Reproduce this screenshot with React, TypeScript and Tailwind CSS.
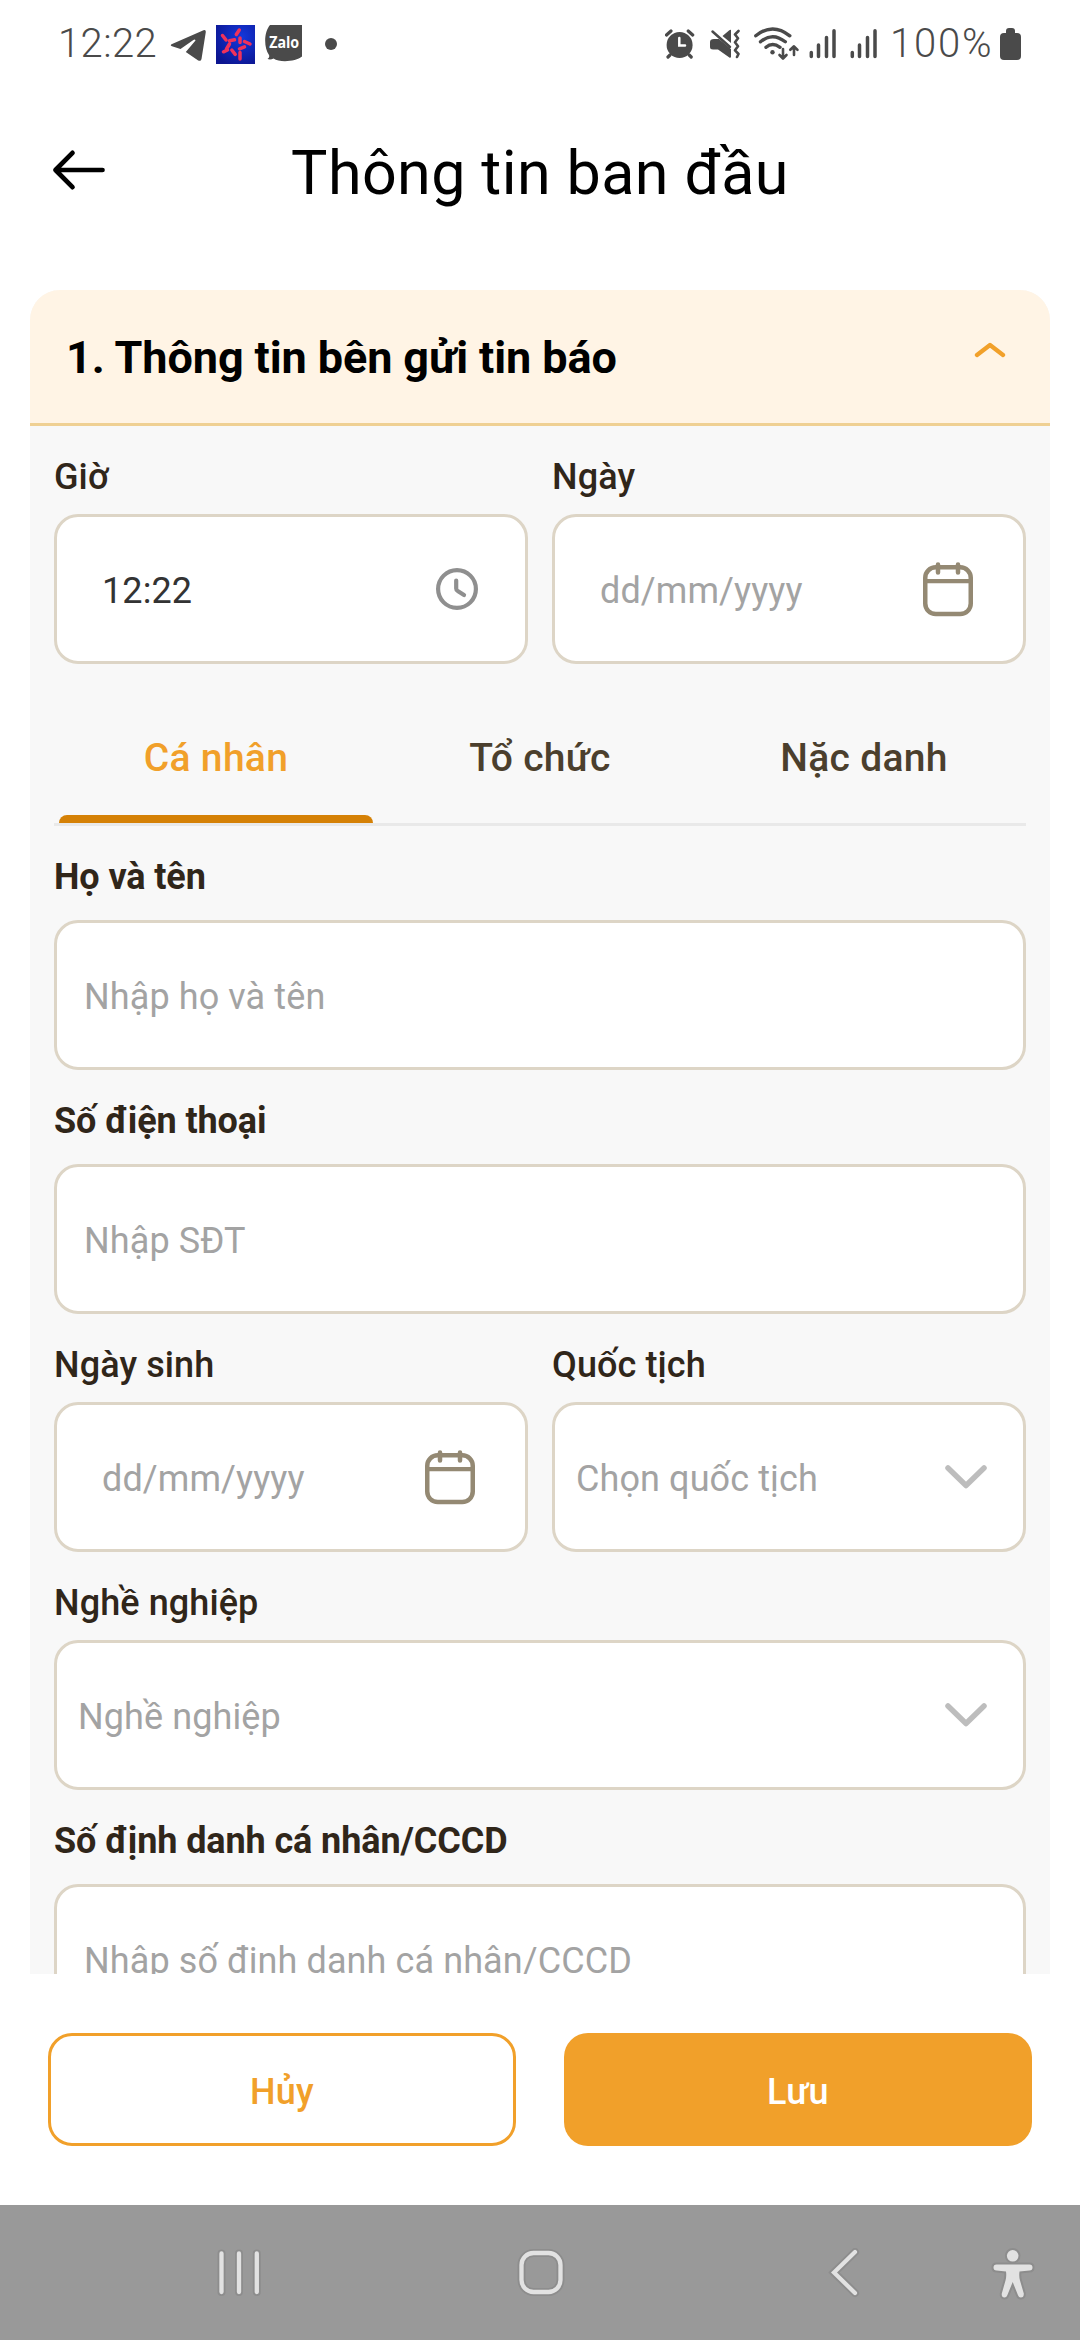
import React from "react";

function StatusBar() {
  return (
    <div className="flex h-[88px] items-start pl-[58px] pr-[59px] pt-[24px] text-[#4a4a4a]">
      <span className="h-[40px] w-[112px] whitespace-nowrap text-[40px] font-light leading-[40px] tracking-[0.400px]">12:22</span>
      <svg className="h-[40px] w-[37px]" viewBox="170 24 37 40" fill="currentColor">
        <path d="M171.500 44.200 L203.500 30.300 Q206 29.500 205.800 32 L201.500 59 Q200.800 61.800 198.200 60.400 L185.800 52 L195.500 40.500 Q195 39 193.400 40 L180.500 48.900 L172 46.300 Q169.800 45.300 171.500 44.200 Z" />
      </svg>
      <svg className="ml-[9px] mt-px h-[39px] w-[39px]" viewBox="0 0 39 39">
        <defs>
          <radialGradient id="blue" cx="0.65" cy="0.3" r="0.8">
            <stop offset="0" stopColor="#1438dc" />
            <stop offset="1" stopColor="#0c1590" />
          </radialGradient>
        </defs>
        <rect width="39" height="39" fill="url(#blue)" />
        <g stroke="#f0325a" strokeWidth="3.500" strokeLinecap="round">
          <path d="M23.300 5 L20.300 9.500 M6.500 10.500 L10 15 M13.500 15.800 L18.500 14.800 M24 13 L24 17.500 M28.500 16.500 L34 19 M13.500 19 L10.500 24 M28.500 21.800 L23.500 23.800 M11.500 25 L7.500 26.800 M15.800 25 L19.200 29.300 M24 27.500 L24 34" />
        </g>
      </svg>
      <svg className="ml-[10px] mt-px h-[38px] w-[37px]" viewBox="0 0 37 38">
        <path d="M5 0 H37 V31.500 C31 36.500 15 38 8.500 33.500 Q5.500 35.200 2.500 34 Q5 32.500 4 30 C-1.500 22 -1 7 5 0 Z" fill="#4a4a4a" />
        <text x="19.200" y="22.800" textAnchor="middle" fontSize="15.500" fontWeight="700" fill="#fff" fontFamily="Open Sans, sans-serif" textLength="30" lengthAdjust="spacingAndGlyphs">Zalo</text>
      </svg>
      <span className="ml-[23px] mt-[14px] size-[12px] rounded-full bg-[#4a4a4a]" />
      <div className="ml-auto flex items-start">
        <svg className="h-[40px] w-[30px]" viewBox="666 24 30 40">
          <circle cx="680.600" cy="45" r="13" fill="currentColor" />
          <path d="M667.500 35 L672 31 M693.700 35 L689.200 31 M671 55 L669 57 M690.200 55 L692.200 57" stroke="currentColor" strokeWidth="3.200" strokeLinecap="round" />
          <path d="M680.300 38 V45.500 H686" fill="none" stroke="#fff" strokeWidth="2.500" strokeLinecap="round" />
        </svg>
        <svg className="ml-[15px] h-[40px] w-[30px]" viewBox="711 24 30 40">
          <path d="M732 30 V43 L723.500 36 L730 30.600 Q731.500 29.500 732 30 Z M715 39 H720 L732 49 V57 Q731.500 58.500 730 57.300 L719 49.500 H714 Q711 49.500 711 47 V42 Q711 39 715 39 Z" fill="currentColor" />
          <path d="M713.500 31.500 L731 47" stroke="currentColor" strokeWidth="2.500" strokeLinecap="round" />
          <path d="M739.500 31 L736 34.500 L739 38.300 L736 42.300 L739 46.300 L736 50.300 L739.500 54 L738 57" fill="none" stroke="currentColor" strokeWidth="2.600" strokeLinejoin="round" strokeLinecap="round" />
        </svg>
        <svg className="ml-[14px] h-[40px] w-[46px]" viewBox="755 24 46 40" fill="none" stroke="currentColor" strokeWidth="3.400" strokeLinecap="round" strokeLinejoin="round">
          <path d="M756.800 35.800 Q773.500 22 790.800 35.800 M761.500 41.800 Q773.500 31.500 786.300 41.800 M767 47.300 Q773.500 41.700 781 47.300" />
          <circle cx="773.500" cy="52.300" r="2.200" fill="currentColor" stroke="none" />
          <path d="M784 49 V58 M780.500 55 L784 58.500 L787.500 55 M795 55 V46.500 M791.300 49.800 L795 46.300 L798.500 49.800" strokeWidth="2.600" />
        </svg>
        {[0, 1].map((i) => (
          <svg key={i} className="ml-[9px] h-[40px] w-[27px] last-of-type:ml-[14px]" viewBox="809 24 27 40" stroke="currentColor" strokeWidth="3.500" strokeLinecap="round">
            <path d="M811.300 52.500 V56.500 M818.500 45 V56.500 M826.500 37.500 V56.500 M834 30.700 V56.500" />
          </svg>
        ))}
        <span className="ml-[13px] h-[40px] w-[110px] whitespace-nowrap text-[40px] font-light leading-[40px] tracking-[1.800px]">100%</span>
        <span className="relative mt-[9px] h-[27px] w-[21px] rounded-[4px] bg-[#4a4a4a]">
          <span className="absolute left-[6px] top-[-5px] h-[6px] w-[9px] rounded-t-[3px] bg-[#4a4a4a]" />
        </span>
      </div>
    </div>
  );
}

function CalendarIcon() {
  return (
    <svg className="h-[56px] w-[50px]" viewBox="0 0 50 56" fill="none" stroke="#948973" strokeWidth="4.500" strokeLinecap="round">
      <rect x="2.250" y="6.250" width="45.500" height="46.800" rx="10.500" />
      <path d="M2.500 20.200 H47.500" strokeWidth="4.200" strokeLinecap="butt" />
      <path d="M15 3.500 V11.500 M35 3.500 V11.500" />
    </svg>
  );
}

function ClockIcon() {
  return (
    <svg className="h-[44px] w-[44px]" viewBox="0 0 44 44" fill="none" stroke="#8f8f8f" strokeWidth="4.200" strokeLinecap="round" strokeLinejoin="round">
      <circle cx="22" cy="22" r="18.900" />
      <path d="M21.200 13.500 V21.500 Q21.200 23.200 22.700 24 L29 28" />
    </svg>
  );
}

function ChevronDown() {
  return (
    <svg className="h-[26px] w-[42px]" viewBox="0 0 42 26" fill="none" stroke="#bdbdbd" strokeWidth="5.500" strokeLinecap="round" strokeLinejoin="round">
      <path d="M3 4 L21 21.500 L39 4" />
    </svg>
  );
}

function Label({ text, bold = false }: { text: string; bold?: boolean }) {
  return (
    <div className={bold ? "mb-[23px] h-[40px] whitespace-nowrap text-[36px] font-bold leading-[40px] tracking-[-0.100px] text-[#30261a]" : "mb-[17px] h-[40px] whitespace-nowrap text-[36px] font-medium leading-[40px] tracking-[0.100px] text-[#30261a]"}>
      {text}
    </div>
  );
}

function Box({ children, className = "" }: { children: React.ReactNode; className?: string }) {
  return (
    <div className={"flex h-[150px] items-center justify-between rounded-[24px] border-[3px] border-[#ddd5c6] bg-white text-[36px] leading-[40px] tracking-[0.100px] text-[#a3a3a3] " + className}>
      {children}
    </div>
  );
}

export default function App() {
  return (
    <div className="flex h-[2340px] w-[1080px] flex-col overflow-hidden bg-white font-['Roboto',sans-serif]">
      <StatusBar />
      <header className="grid h-[202px] grid-cols-[105px_1fr_105px] items-start">
        <svg className="ml-[52px] mt-[60px] h-[44px] w-[53px]" viewBox="0 0 53 44" fill="none" stroke="#000" strokeWidth="4.700" strokeLinecap="round" strokeLinejoin="round">
          <path d="M20.500 4.800 L3.500 22 L20.500 39.200 M3.500 22 H50.500" />
        </svg>
        <h1 className="mt-[50px] text-center text-[61px] font-normal leading-[70px] tracking-[0.400px] text-black">Thông tin ban đầu</h1>
      </header>

      <main className="mx-[30px] h-[1684px] overflow-hidden rounded-t-[30px] bg-[#f8f8f8]">
        <div className="flex h-[136px] items-start justify-between border-b-[3px] border-[#efd093] bg-[#fff4e5] pl-[36px] pr-[44px]">
          <h2 className="mt-[43px] whitespace-nowrap text-[45px] font-bold leading-[50px] tracking-[-0.100px] text-black">1. Thông tin bên gửi tin báo</h2>
          <svg className="mt-[51px] h-[18px] w-[32px]" viewBox="0 0 32 18" fill="none" stroke="#f1a02a" strokeWidth="4.300" strokeLinecap="round" strokeLinejoin="round">
            <path d="M3 14 L16 4 L29 14" />
          </svg>
        </div>

        <div className="px-[24px] pt-[31px]">
          <div className="grid grid-cols-2 gap-6">
            <div>
              <Label text="Giờ" />
              <Box className="pl-[45px] pr-[46px]">
                <span className="mt-[3px] text-[#333]">12:22</span>
                <ClockIcon />
              </Box>
            </div>
            <div>
              <Label text="Ngày" />
              <Box className="pl-[45px] pr-[50px]">
                <span className="mt-[3px]">dd/mm/yyyy</span>
                <CalendarIcon />
              </Box>
            </div>
          </div>

          <div className="mt-[24px] grid h-[138px] grid-cols-3 border-b-[3px] border-[#e9e9e9] text-center text-[39px] font-medium leading-[44px] tracking-[0.300px] text-[#4b3f2d]">
            <div className="flex flex-col items-center justify-between pt-[48px] text-[#f1a02a]">
              Cá nhân
              <div className="h-[8px] w-[314px] rounded-t-[8px] bg-[#d58106]" />
            </div>
            <div className="pt-[48px]">Tổ chức</div>
            <div className="pt-[48px]">Nặc danh</div>
          </div>

          <div className="pt-[31px]">
            <Label text="Họ và tên" bold />
            <Box className="px-[27px]"><span className="mt-[3px]">Nhập họ và tên</span></Box>
          </div>
          <div className="pt-[31px]">
            <Label text="Số điện thoại" bold />
            <Box className="px-[27px]"><span className="mt-[3px]">Nhập SĐT</span></Box>
          </div>
          <div className="grid grid-cols-2 gap-6 pt-[31px]">
            <div>
              <Label text="Ngày sinh" />
              <Box className="pl-[45px] pr-[50px]">
                <span className="mt-[3px]">dd/mm/yyyy</span>
                <CalendarIcon />
              </Box>
            </div>
            <div>
              <Label text="Quốc tịch" />
              <Box className="pl-[21px] pr-[36px]">
                <span className="mt-[3px]">Chọn quốc tịch</span>
                <ChevronDown />
              </Box>
            </div>
          </div>
          <div className="pt-[31px]">
            <Label text="Nghề nghiệp" />
            <Box className="pl-[21px] pr-[36px]">
              <span className="mt-[3px]">Nghề nghiệp</span>
              <ChevronDown />
            </Box>
          </div>
          <div className="pt-[31px]">
            <Label text="Số định danh cá nhân/CCCD" bold />
            <Box className="px-[27px]"><span className="mt-[3px]">Nhập số định danh cá nhân/CCCD</span></Box>
          </div>
        </div>
      </main>

      <footer className="grid h-[231px] grid-cols-2 items-start gap-12 bg-white px-12 pt-[59px] text-[36px] font-medium tracking-[0.300px]">
        <button className="h-[113px] rounded-[24px] border-[3px] border-[#f1a02a] bg-white pt-[5px] text-[#f1a02a]">Hủy</button>
        <button className="h-[113px] rounded-[24px] bg-[#f1a02a] pt-[5px] text-white">Lưu</button>
      </footer>

      <nav className="flex h-[135px] items-center bg-[#999]">
        <svg className="ml-[216px] h-[50px] w-[46px]" viewBox="216 2247.500 46 50" strokeLinecap="round">
          <path d="M221.500 2253 V2291.500 M239 2253 V2291.500 M256.800 2253 V2291.500" stroke="#8d8d8d" strokeWidth="8" />
          <path d="M221.500 2253 V2291.500 M239 2253 V2291.500 M256.800 2253 V2291.500" stroke="#e2e2e2" strokeWidth="4.300" />
        </svg>
        <svg className="ml-[254px] h-[50px] w-[50px]" viewBox="516 2247.500 50 50" fill="none">
          <rect x="521.500" y="2252.500" width="39" height="39" rx="12" stroke="#8d8d8d" strokeWidth="8" />
          <rect x="521.500" y="2252.500" width="39" height="39" rx="12" stroke="#e2e2e2" strokeWidth="4.300" />
        </svg>
        <svg className="ml-[262px] h-[50px] w-[34px]" viewBox="828 2247.500 34 50" fill="none" strokeLinecap="round">
          <path d="M855 2251.500 L834 2272 L855 2292.500" stroke="#8d8d8d" strokeWidth="8" />
          <path d="M855 2251.500 L834 2272 L855 2292.500" stroke="#e2e2e2" strokeWidth="4.200" />
        </svg>
        <svg className="ml-[128px] h-[54px] w-[46px]" viewBox="990 2245.500 46 54" fill="#e2e2e2" stroke="#8d8d8d" strokeWidth="4" paintOrder="stroke">
          <circle cx="1012.700" cy="2255.300" r="5.800" />
          <path d="M996.500 2264 H1029.500 Q1032.500 2264 1032.500 2267 Q1032.500 2270 1029.500 2270 L1019.500 2271 Q1018.800 2276 1020 2280 L1023.800 2293 Q1024 2297 1020.800 2297 Q1018.800 2297 1018 2294.800 L1012.700 2281.500 L1007.300 2294.800 Q1006.500 2297 1004.500 2297 Q1001.300 2297 1001.800 2293 L1005.500 2280 Q1006.700 2276 1006 2271 L996.500 2270 Q993.500 2270 993.500 2267 Q993.500 2264 996.500 2264 Z" />
        </svg>
      </nav>
    </div>
  );
}
